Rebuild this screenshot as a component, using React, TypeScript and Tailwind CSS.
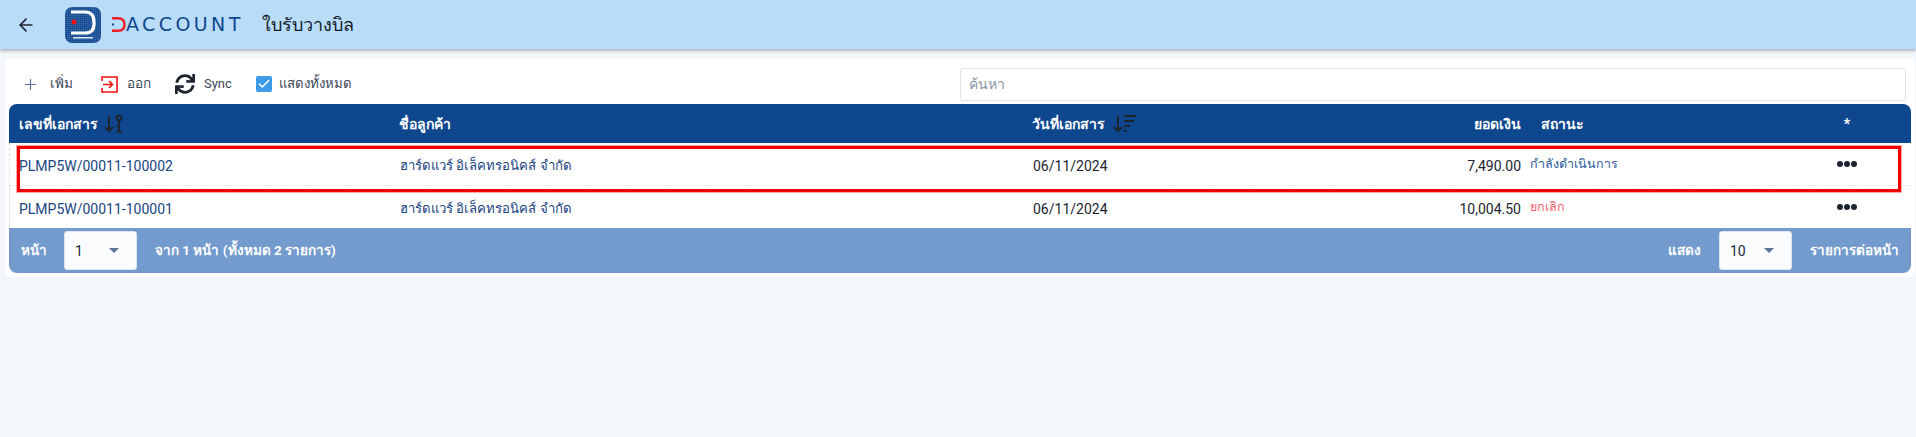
import { FaSync } from 'react-icons/fa'
import { ArrowLeft, Plus, Check } from 'lucide-react'

const columns = 'grid grid-cols-[390px_633px_289px_200px_262px_128px] items-center'

const rows = [
    { no: 'PLMP5W/00011-100002', status: 'กำลังดำเนินการ', date: '06/11/2024', amount: '7,490.00', cancelled: false },
    { no: 'PLMP5W/00011-100001', status: 'ยกเลิก', date: '06/11/2024', amount: '10,004.50', cancelled: true },
]

function Logo() {
    return (
        <div className="flex items-center">
            <svg width="36" height="36" viewBox="0 0 36 36">
                <defs>
                    <pattern id="dots" width="2" height="2" patternUnits="userSpaceOnUse">
                        <rect width="2" height="2" fill="#1c4f94" />
                        <rect width="1" height="1" fill="#3a6cae" />
                    </pattern>
                </defs>
                <rect width="36" height="36" rx="7" fill="url(#dots)" />
                <path d="M6 5 H20 Q29 5 29 15 V17 Q29 26 20 26 H6" fill="none" stroke="#fff" strokeWidth="3.2" />
                <circle cx="9" cy="15" r="2.5" fill="#f01010" />
                <rect x="8" y="30" width="20" height="1.5" fill="#dfe8f5" />
            </svg>
            <svg className="ml-[11px]" width="14" height="15" viewBox="0 0 14 15">
                <path d="M0 1.2 H6 Q12.5 1.2 12.5 7.5 Q12.5 13.8 6 13.8 H0" fill="none" stroke="#ee1c25" strokeWidth="2.4" />
                <rect x="0" y="6.5" width="2" height="2" fill="#0e478e" />
            </svg>
            <span className="font-['DejaVu_Sans',sans-serif] text-[19px] leading-none tracking-[3.4px] text-[#0e478e]">
                ACCOUNT
            </span>
        </div>
    )
}

function ExitIcon() {
    return (
        <svg width="17" height="17" viewBox="0 0 17 17" fill="none" stroke="#f01010" strokeWidth="1.6">
            <path d="M1 5 V1 H16 V16 H1 V12" />
            <path d="M2 8.5 H11.5 M8 5 L11.5 8.5 L8 12" />
        </svg>
    )
}

function SortKeyIcon() {
    return (
        <svg width="20" height="20" viewBox="0 0 20 20" fill="none" stroke="#1c2430" strokeWidth="2">
            <path d="M5 2 V17 M1 13 L5 17 L9 13" />
            <circle cx="15" cy="4" r="2.4" />
            <path d="M15 6.5 V17 M12.5 17.5 H18 M15 12 H12.5" />
        </svg>
    )
}

function SortDateIcon() {
    return (
        <svg width="24" height="20" viewBox="0 0 24 20" fill="none" stroke="#1c2430" strokeWidth="2">
            <path d="M5 2 V17 M1 13 L5 17 L9 13" />
            <path d="M11 2 H23 M11 7 H21 M11 12 H17 M11 17 H14" />
        </svg>
    )
}

function PageSelect({ value }: { value: string }) {
    return (
        <div className="flex h-[39px] w-[73px] items-center justify-between rounded-[3px] border border-[#dfe5ee] bg-[#fbfcfd] pr-[17px] pl-[10px] text-sm font-normal text-[#222b38]">
            <span>{value}</span>
            <span className="h-0 w-0 border-x-[5px] border-t-[5px] border-x-transparent border-t-[#5d7398]" />
        </div>
    )
}

export default function App() {
    return (
        <div className="flex min-h-[437px] flex-col bg-[#f3f6fa] font-['Roboto','Noto_Sans',sans-serif] text-sm">
            {/* Top bar */}
            <header className="flex h-[49px] items-center bg-[#b9dcf8] pl-4 shadow-[0_2px_3px_rgba(90,100,120,0.45)]">
                <ArrowLeft size={20} strokeWidth={2} className="text-[#1c2430]" />
                <div className="ml-[29px]">
                    <Logo />
                </div>
                <h1 className="ml-[18px] text-lg font-medium text-[#111827]">ใบรับวางบิล</h1>
            </header>

            {/* Card */}
            <main className="mt-[9px] mr-[1px] ml-[5px] rounded-md bg-white pr-[4px] pb-[4px] pl-[4px]">
                {/* Toolbar */}
                <div className="flex h-[46px] items-center pt-[6px]">
                    <div className="flex items-center pl-[13px] text-[13.5px]">
                        <Plus size={17} strokeWidth={1.6} className="text-[#5c7199]" />
                        <span className="ml-[11px] text-[#3b4658]">เพิ่ม</span>
                        <span className="ml-[28px]">
                            <ExitIcon />
                        </span>
                        <span className="ml-[9px] text-[#3b4658]">ออก</span>
                        <FaSync size={20} className="ml-[24px] text-[#1c2430]" />
                        <span className="ml-[9px] text-[13px] text-[#3b4658]">Sync</span>
                        <span className="ml-[24px] flex h-4 w-4 items-center justify-center rounded-[2px] bg-[#3d9ae8]">
                            <Check size={14} strokeWidth={2.6} className="text-white" />
                        </span>
                        <span className="ml-[7px] text-[13.2px] text-[#3b4658]">แสดงทั้งหมด</span>
                    </div>
                    <div className="mr-[5px] ml-auto flex h-[33px] w-[946px] items-center rounded-[3px] border border-[#dfe5ee] pl-2 text-[#8a94a6]">
                        ค้นหา
                    </div>
                </div>

                {/* Table */}
                <div className="relative">
                    <div className={`${columns} h-[39px] rounded-t-lg bg-[#0e478e] font-bold text-white`}>
                        <div className="flex items-center gap-[6px] pl-[10px]">
                            เลขที่เอกสาร
                            <SortKeyIcon />
                        </div>
                        <div>ชื่อลูกค้า</div>
                        <div className="flex items-center gap-2">
                            วันที่เอกสาร
                            <SortDateIcon />
                        </div>
                        <div className="text-right">ยอดเงิน</div>
                        <div className="pl-5">สถานะ</div>
                        <div className="text-center">*</div>
                    </div>

                    {rows.map((row, i) => (
                        <div
                            key={row.no}
                            className={`${columns} h-[42.5px] border-l border-[#e3e7ee] pt-[5px] ${i === 0 ? 'border-b border-dashed border-b-[#e3e7ee]' : ''}`}
                        >
                            <div className="pl-[9px] text-[#1a4482]">{row.no}</div>
                            <div className="text-[13.2px] text-[#1a4482]">ฮาร์ดแวร์ อิเล็คทรอนิคส์ จำกัด</div>
                            <div className="text-[#1c2430]">{row.date}</div>
                            <div className="pr-[1px] text-right text-[#1c2430]">{row.amount}</div>
                            <div className={`pb-1 pl-2 text-[12.5px] ${row.cancelled ? 'text-[#f4606c]' : 'text-[#2c5c9e]'}`}>
                                {row.status}
                            </div>
                            <div className="flex justify-center gap-[1px] pr-[3px] pb-1">
                                <span className="h-[6px] w-[6px] rounded-full bg-[#1c2430]" />
                                <span className="h-[6px] w-[6px] rounded-full bg-[#1c2430]" />
                                <span className="h-[6px] w-[6px] rounded-full bg-[#1c2430]" />
                            </div>
                        </div>
                    ))}

                    {/* Footer */}
                    <div className="flex h-[45px] items-center rounded-b-lg bg-[#739bcd] pr-3 pl-3 text-[13.5px] font-bold text-white">
                        <span>หน้า</span>
                        <div className="ml-[17px]">
                            <PageSelect value="1" />
                        </div>
                        <span className="ml-[18px]">จาก 1 หน้า (ทั้งหมด 2 รายการ)</span>
                        <span className="ml-auto">แสดง</span>
                        <div className="mx-[18px]">
                            <PageSelect value="10" />
                        </div>
                        <span>รายการต่อหน้า</span>
                    </div>

                    {/* Red annotation around first row */}
                    <div className="absolute top-[42px] left-[8px] h-[46px] w-[1884px] border-[3px] border-[#f40000] shadow-[0_0_0_1px_rgba(255,0,0,0.35)]" />
                </div>
            </main>
        </div>
    )
}
